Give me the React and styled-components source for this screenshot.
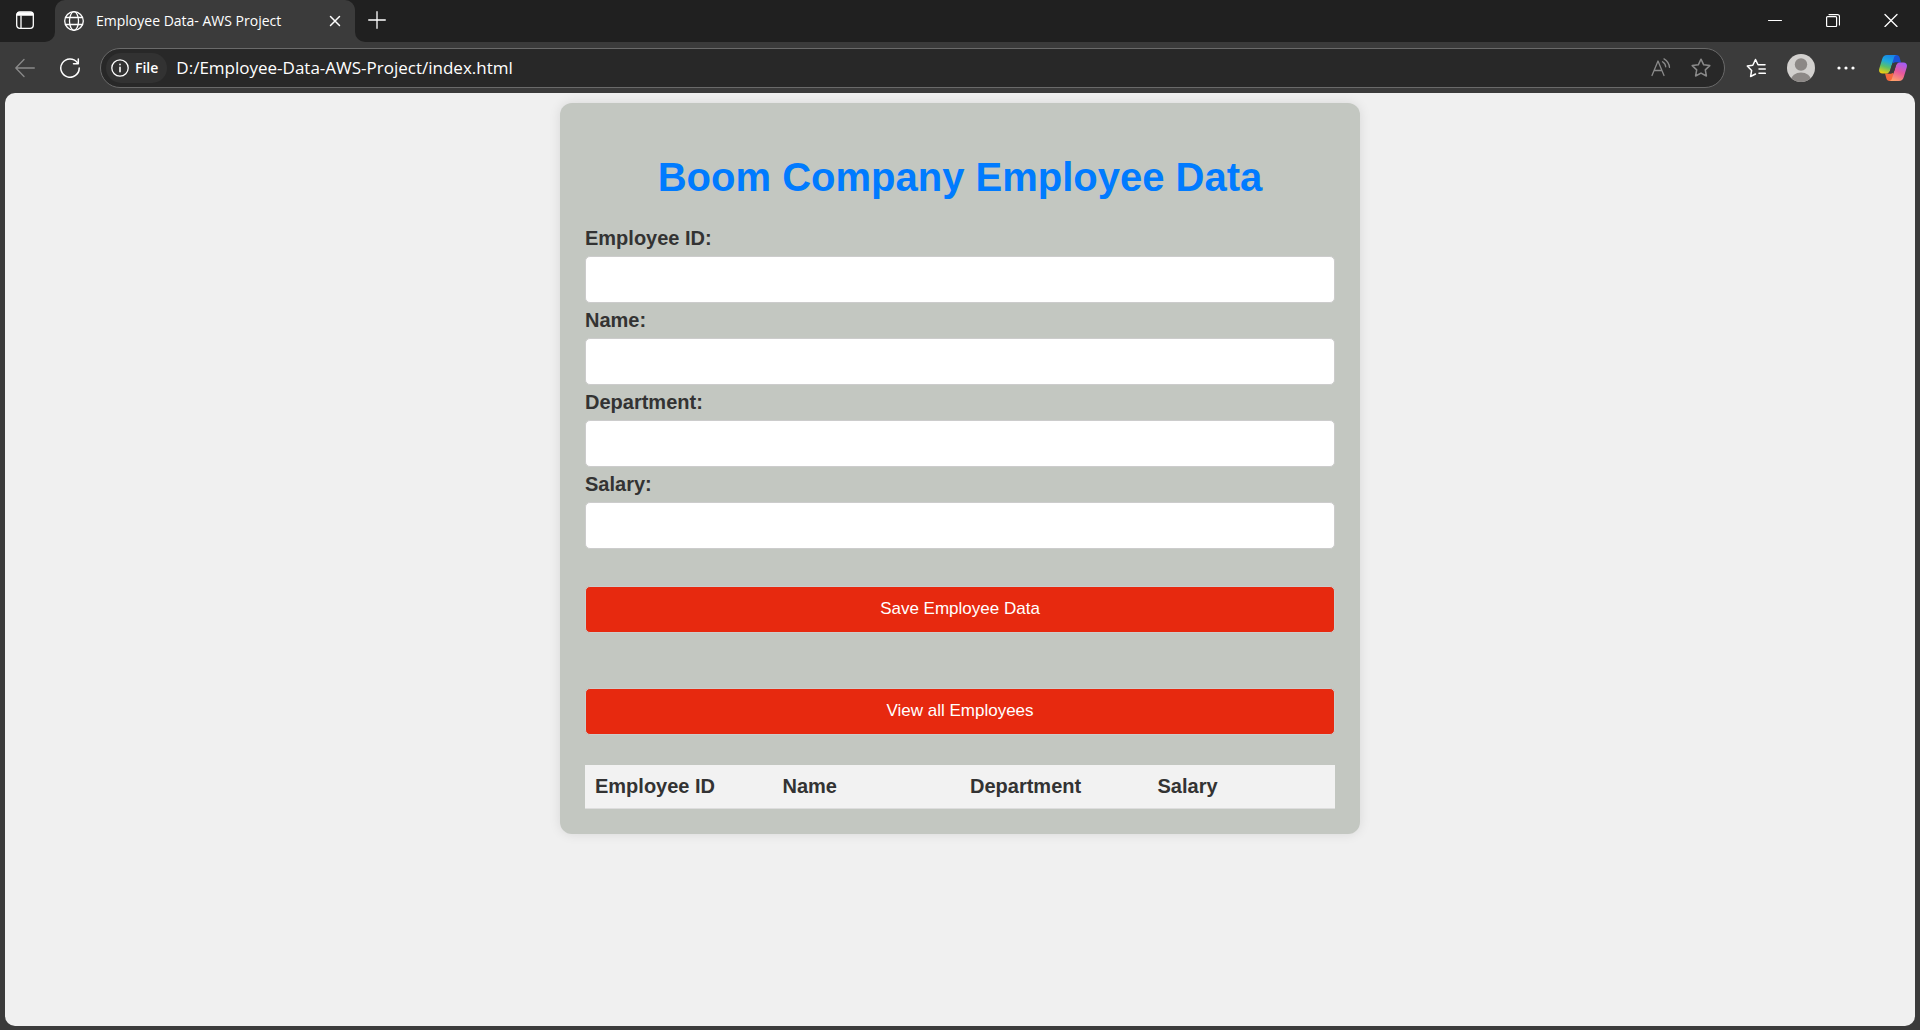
import React from "react";
import styled, { createGlobalStyle } from "styled-components";

const GlobalStyle = createGlobalStyle`
  *, *::before, *::after { box-sizing: border-box; }
  body { margin: 0; background: #3b3b3b; }
  button, input { font-family: inherit; }
`;

const uiFont = `"Open Sans", "Noto Sans", sans-serif`;

const Browser = styled.div`
  display: flex;
  flex-direction: column;
  min-height: 100vh;
  background: #3b3b3b;
  color: #fff;
  font-family: ${uiFont};
`;

const TabStrip = styled.header`
  display: flex;
  height: 42px;
  background: #3b3b3b;
`;

const StripStart = styled.div`
  display: flex;
  width: 55px;
  padding-right: 5px;
  background: #202020;
  border-bottom-right-radius: 10px;
`;

const TabHolder = styled.div`
  background: #202020;
`;

const Tab = styled.div`
  display: flex;
  align-items: center;
  gap: 12px;
  width: 300px;
  height: 41px;
  padding: 0 8px 0 9px;
  background: #3b3b3b;
  border-radius: 10px 10px 0 0;
  box-shadow: 0 1px 0 #3b3b3b;
`;

const TabTitle = styled.span`
  flex: 1;
  font-size: 14px;
  line-height: 20px;
  white-space: nowrap;
`;

const StripEnd = styled.div`
  display: flex;
  flex: 1;
  background: #202020;
  border-bottom-left-radius: 10px;
`;

const Spacer = styled.div`
  flex: 1;
`;

const IconButton = styled.button`
  display: flex;
  flex: none;
  align-items: center;
  justify-content: center;
  width: ${(p) => p.$width}px;
  height: 40px;
  padding: 0;
  border: 0;
  background: none;
  color: ${(p) => (p.$dim ? "#8a8a8a" : "#fff")};
`;

const Toolbar = styled.nav`
  display: flex;
  align-items: center;
  height: 51px;
  padding: 0 2px;
`;

const AddressBar = styled.div`
  display: flex;
  flex: 1;
  align-items: center;
  height: 40px;
  margin: 0 8px;
  padding: 0 3px 0 5px;
  background: #282828;
  border: 1px solid #6a6a6a;
  border-radius: 20px;
`;

const FileChip = styled.button`
  display: flex;
  align-items: center;
  gap: 6px;
  height: 30px;
  padding: 0 9px 0 5px;
  border: 0;
  border-radius: 15px;
  background: #323232;
  color: #fff;
  font-size: 14px;
  font-weight: 600;
`;

const AddressInput = styled.input`
  flex: 1;
  min-width: 0;
  padding: 0 9px;
  border: 0;
  outline: 0;
  background: none;
  color: #fff;
  font-size: 17px;
  line-height: 24px;
`;

const Page = styled.main`
  flex: 1;
  margin: 0 5px 4px;
  padding: 10px;
  background: #f0f0f0;
  border-radius: 10px;
  color: #333;
  font-family: "Liberation Sans", Arial, sans-serif;
  font-size: 20px;
  line-height: 23px;
`;

const Card = styled.section`
  max-width: 800px;
  margin: 0 auto;
  padding: 25px;
  background: #c3c7c1;
  border-radius: 12px;
  box-shadow: 0 0 12px rgba(0, 0, 0, 0.1);
`;

const Title = styled.h1`
  margin: 26px 0 27px;
  color: #007bff;
  font-size: 40px;
  line-height: 46px;
  text-align: center;
`;

const Form = styled.form`
  display: flex;
  flex-direction: column;
  gap: 6px;
`;

const Label = styled.label`
  font-weight: 700;
`;

const control = `
  width: 100%;
  height: 47px;
  padding: 12px;
  border: 1px solid #ccc;
  border-radius: 5px;
  font-size: 17px;
`;

const TextInput = styled.input`
  ${control}
  background: #fff;
`;

const ActionButton = styled.button`
  ${control}
  padding: 0 12px 2px;
  background: #e7290f;
  color: #fff;
`;

const Actions = styled.div`
  display: flex;
  flex-direction: column;
  gap: 55px;
  margin: 37px 0 30px;
`;

const Table = styled.table`
  width: 100%;
  table-layout: fixed;
  border-collapse: collapse;
`;

const HeaderCell = styled.th`
  padding: 10px;
  background: #f2f2f2;
  border-bottom: 1px solid #ddd;
  text-align: left;
`;

function Line({ size = 20, width = 1.3, children }) {
  return (
    <svg width={size} height={size} viewBox={`0 0 ${size} ${size}`} fill="none" stroke="currentColor"
      strokeWidth={width} strokeLinecap="round" strokeLinejoin="round" aria-hidden="true">
      {children}
    </svg>
  );
}

const starPath = "M10 1.2l2.7 5.6 6.1.8-4.5 4.3 1.1 6.1L10 15.1 4.6 18l1.1-6.1L1.2 7.6l6.1-.8z";

function CopilotLogo() {
  return (
    <svg width="28" height="26" viewBox="0 0 28 26" aria-hidden="true">
      <defs>
        <linearGradient id="cpBlue" x1="0.6" y1="0" x2="0.3" y2="1">
          <stop offset="0" stopColor="#1787e8" />
          <stop offset="0.35" stopColor="#1fa9dc" />
          <stop offset="0.65" stopColor="#5cc067" />
          <stop offset="1" stopColor="#f0cf10" />
        </linearGradient>
        <linearGradient id="cpPink" x1="0.7" y1="0" x2="0.3" y2="1">
          <stop offset="0" stopColor="#a45cf5" />
          <stop offset="0.5" stopColor="#e8589b" />
          <stop offset="1" stopColor="#ffa06a" />
        </linearGradient>
      </defs>
      <path d="M12 0h5.500c1.600 0 2.700 1 3.100 2.500L22 7.500h-3.500c-2 0-3-.3-4.500 1z" fill="#1a52d6" />
      <path d="M16 26h-5.500c-1.600 0-2.700-1-3.100-2.500L6 18.500h3.500c2 0 3 .3 4.500-1z" fill="#f4683c" />
      <path d="M8 0h9.500c-1.500.3-2.200 1.500-2.700 3.200L11.300 15c-.7 2.300-1.800 3.500-4 3.500H3.500C.5 18.500-.5 16.300.3 13.500L3.200 4C4 1.300 5.500 0 8 0z" fill="url(#cpBlue)" />
      <path d="M20 26h-9.500c1.500-.3 2.200-1.500 2.700-3.200L16.700 11c.7-2.300 1.800-3.500 4-3.500h3.800c3 0 4 2.200 3.200 5L24.800 22c-.8 2.700-2.300 4-4.800 4z" fill="url(#cpPink)" />
      <path d="M16.500 7.500h3.200c-1.600.6-2.300 1.800-2.900 3.700l-1.300 4.300c-.7 2-1.700 3-3.700 3H8.500c1.600-.6 2.300-1.800 2.900-3.700l1.300-4.300c.7-2 1.800-3 3.800-3z" fill="#3b3b3b" />
    </svg>
  );
}

const fields = [
  { id: "employee-id", label: "Employee ID:" },
  { id: "name", label: "Name:" },
  { id: "department", label: "Department:" },
  { id: "salary", label: "Salary:" },
];

const columns = ["Employee ID", "Name", "Department", "Salary"];

export default function App() {
  return (
    <>
      <GlobalStyle />
      <Browser>
        <TabStrip>
          <StripStart>
            <IconButton $width={50} aria-label="Tab actions">
              <Line>
                <rect x="1.700" y="2" width="16.600" height="16.300" rx="3" />
                <path d="M2.500 4.500h15M3 3.500h14" strokeWidth="2.500" />
                <path d="M6 6v12" />
              </Line>
            </IconButton>
          </StripStart>
          <TabHolder>
            <Tab>
              <Line>
                <circle cx="10" cy="10" r="9.300" />
                <ellipse cx="10" cy="10" rx="4.500" ry="9.300" />
                <path d="M1.500 6.500h17M1.500 13.500h17" />
              </Line>
              <TabTitle>Employee Data- AWS Project</TabTitle>
              <IconButton $width={24} aria-label="Close tab">
                <Line size={12} width={1.5}><path d="M1.500 1.500l9 9M10.500 1.500l-9 9" /></Line>
              </IconButton>
            </Tab>
          </TabHolder>
          <StripEnd>
            <IconButton $width={44} aria-label="New tab">
              <Line size={18}><path d="M9 .7v16.600M.7 9h16.600" /></Line>
            </IconButton>
            <Spacer />
            <IconButton $width={58} aria-label="Minimize">
              <Line size={14} width={1}><path d="M.5 7.500h13" /></Line>
            </IconButton>
            <IconButton $width={58} aria-label="Restore">
              <Line size={14} width={1.2}>
                <rect x=".6" y="3.600" width="10" height="10" rx="1" />
                <path d="M3 1.600h8.500q2 0 2 2V12" />
              </Line>
            </IconButton>
            <IconButton $width={58} aria-label="Close">
              <Line size={14}><path d="M1 1.500l12 12M13 1.500L1 13.500" /></Line>
            </IconButton>
          </StripEnd>
        </TabStrip>

        <Toolbar>
          <IconButton $width={45} $dim aria-label="Back">
            <Line><path d="M19.300 10H.8M9 1.500L.8 10 9 18.500" /></Line>
          </IconButton>
          <IconButton $width={45} aria-label="Refresh">
            <Line width={1.5}>
              <path d="M17.300 4.500A9.200 9.200 0 1 0 19.200 10" />
              <path d="M18.300 .9v4.800h-4.800" />
            </Line>
          </IconButton>
          <AddressBar>
            <FileChip>
              <Line size={18}>
                <circle cx="9" cy="9" r="8.200" />
                <path d="M9 8.300v4.500M9 5.300v.4" strokeWidth="1.600" />
              </Line>
              File
            </FileChip>
            <AddressInput aria-label="Address" defaultValue="D:/Employee-Data-AWS-Project/index.html" />
            <IconButton $width={40} $dim aria-label="Read aloud">
              <Line>
                <path d="M1 17.500L7 3l6 14.500M3.100 12.500h7.800" />
                <path d="M11.500 3.800q3 1.700 3.200 5M13 .9q5 3 5.500 8.500" />
              </Line>
            </IconButton>
            <IconButton $width={40} $dim aria-label="Add to favorites">
              <Line width={1.5}><path d={starPath} /></Line>
            </IconButton>
          </AddressBar>
          <IconButton $width={45} aria-label="Favorites">
            <Line width={1.5}>
              <path d="M9.500 16L4.600 18.500l1-5.900L1.300 8l5.500-.8L9.500 1.500l2.500 5.200h7" />
              <path d="M13 11h6.300M13 15.300h6.300" />
            </Line>
          </IconButton>
          <IconButton $width={45} aria-label="Profile">
            <svg width="28" height="28" viewBox="0 0 28 28" aria-hidden="true">
              <clipPath id="avatar"><circle cx="14" cy="14" r="14" /></clipPath>
              <g clipPath="url(#avatar)">
                <path fill="#d2d0ce" d="M0 0h28v28H0z" />
                <circle cx="14" cy="10.500" r="6.200" fill="#8c8886" />
                <ellipse cx="14" cy="26" rx="10" ry="7.500" fill="#8c8886" />
              </g>
            </svg>
          </IconButton>
          <IconButton $width={45} aria-label="Settings and more">
            <svg width="18" height="4" viewBox="0 0 18 4" fill="currentColor" aria-hidden="true">
              <circle cx="2" cy="2" r="1.600" /><circle cx="9" cy="2" r="1.600" /><circle cx="16" cy="2" r="1.600" />
            </svg>
          </IconButton>
          <IconButton $width={50} aria-label="Copilot"><CopilotLogo /></IconButton>
        </Toolbar>

        <Page>
          <Card>
            <Title>Boom Company Employee Data</Title>
            <Form>
              {fields.map((f) => (
                <React.Fragment key={f.id}>
                  <Label htmlFor={f.id}>{f.label}</Label>
                  <TextInput id={f.id} type="text" />
                </React.Fragment>
              ))}
            </Form>
            <Actions>
              <ActionButton type="button">Save Employee Data</ActionButton>
              <ActionButton type="button">View all Employees</ActionButton>
            </Actions>
            <Table>
              <thead>
                <tr>
                  {columns.map((c) => <HeaderCell key={c} scope="col">{c}</HeaderCell>)}
                </tr>
              </thead>
            </Table>
          </Card>
        </Page>
      </Browser>
    </>
  );
}
